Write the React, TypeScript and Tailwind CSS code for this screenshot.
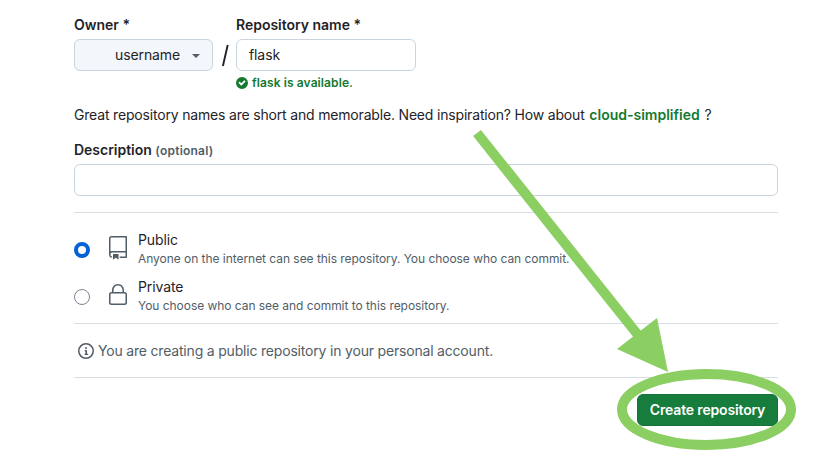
import React from "react";

function RepoIcon() {
  return (
    <svg className="h-6 w-6 shrink-0" viewBox="0 0 24 24" fill="currentColor">
      <path fillRule="evenodd" d="M3 2.75A2.75 2.75 0 015.75 0h14.5a.75.75 0 01.75.75v20.5a.75.75 0 01-.75.75h-6a.75.75 0 010-1.5h5.25v-4H6A1.5 1.5 0 004.5 18v.75c0 .716.43 1.334 1.05 1.605a.75.75 0 01-.6 1.374A3.25 3.25 0 013 18.75v-16zM19.5 1.5V15H6c-.546 0-1.059.146-1.5.401V2.75c0-.69.56-1.25 1.25-1.25H19.5z" />
      <path d="M7 18.25a.25.25 0 01.25-.25h5a.25.25 0 01.25.25v5.01a.25.25 0 01-.397.201l-2.206-1.604a.25.25 0 00-.294 0L7.397 23.46a.25.25 0 01-.397-.2v-5.01z" />
    </svg>
  );
}

function LockIcon() {
  return (
    <svg className="h-6 w-6 shrink-0" viewBox="0 0 24 24" fill="currentColor">
      <path d="M6 9V7.25C6 3.845 8.503 1 12 1s6 2.845 6 6.25V9h.5a2.5 2.5 0 0 1 2.5 2.5v8a2.5 2.5 0 0 1-2.5 2.5h-13A2.5 2.5 0 0 1 3 19.5v-8A2.5 2.5 0 0 1 5.5 9Zm-1.5 2.5v8a1 1 0 0 0 1 1h13a1 1 0 0 0 1-1v-8a1 1 0 0 0-1-1h-13a1 1 0 0 0-1 1Zm3-4.25V9h9V7.25c0-2.67-1.922-4.75-4.5-4.75-2.578 0-4.5 2.08-4.5 4.75Z" />
    </svg>
  );
}

function InfoIcon() {
  return (
    <svg className="h-4 w-4 shrink-0" viewBox="0 0 16 16" fill="currentColor">
      <path d="M0 8a8 8 0 1 1 16 0A8 8 0 0 1 0 8Zm8-6.5a6.5 6.5 0 1 0 0 13 6.5 6.5 0 0 0 0-13ZM6.5 7.75A.75.75 0 0 1 7.25 7h1a.75.75 0 0 1 .75.75v2.75h.25a.75.75 0 0 1 0 1.5h-2a.75.75 0 0 1 0-1.5h.25v-2h-.25a.75.75 0 0 1-.75-.75ZM8 6a1 1 0 1 1 0-2 1 1 0 0 1 0 2Z" />
    </svg>
  );
}

function CheckIcon() {
  return (
    <svg className="h-3 w-3 shrink-0" viewBox="0 0 12 12" fill="currentColor">
      <path d="M6 0a6 6 0 1 1 0 12A6 6 0 0 1 6 0Zm-.705 8.737L9.63 4.403 8.392 3.166 5.295 6.263l-1.7-1.702L2.356 5.8l2.938 2.938Z" />
    </svg>
  );
}

type OptionProps = {
  title: string;
  note: string;
  checked?: boolean;
  icon: React.ReactNode;
};

function VisibilityOption({ title, note, checked, icon }: OptionProps) {
  return (
    <label className="flex h-[47px] items-start">
      <span
        className={
          checked
            ? "mt-[13px] h-4 w-4 shrink-0 rounded-full border-4 border-[#0461d8] bg-white"
            : "mt-[13px] h-4 w-4 shrink-0 rounded-full border border-[#7b8594] bg-white"
        }
      />
      <span className="ml-4 mt-[7px] text-[#515d67]">{icon}</span>
      <span className="ml-2 flex flex-col whitespace-nowrap">
        <span className="h-[21px] pt-px text-sm leading-5 tracking-[-0.1px]">{title}</span>
        <span className="text-xs leading-[18px] tracking-[-0.042px] text-[#515d67]">{note}</span>
      </span>
    </label>
  );
}

export default function App() {
  return (
    <div className="relative h-[451px] w-[815px] overflow-hidden bg-white pl-[74px] pt-[15px] font-['Inter',sans-serif] text-sm text-[#1f2328]">
      <form className="w-[704px]">
        <div className="flex h-[78px]">
          <div className="w-[139px]">
            <div className="h-6 whitespace-nowrap font-semibold leading-5">Owner *</div>
            <div className="flex h-8 items-center rounded-md border border-[#c9d5de] bg-[#f3f6fa] pl-10">
              <span className="w-[66px] whitespace-nowrap tracking-[-0.1px]">username</span>
              <span className="ml-[11px] mt-[2px] border-x-4 border-t-4 border-x-transparent border-t-[#515d67]" />
            </div>
          </div>
          <div className="w-[23px] pl-[9px] pt-[25px]">
            <svg className="h-[32px] w-[7px]" viewBox="0 0 7 32">
              <path d="M0.9 26 5.7 5" stroke="#1f2328" strokeWidth="1.9" />
            </svg>
          </div>
          <div className="w-[180px]">
            <div className="h-6 whitespace-nowrap font-semibold leading-5 tracking-[-0.02px]">Repository name *</div>
            <div className="flex h-8 items-center rounded-md border border-[#c9d5de] pl-3 tracking-[-0.1px]">flask</div>
            <div className="mt-[3px] flex h-[18px] items-center gap-1 whitespace-nowrap text-xs font-semibold text-[#15792f]">
              <CheckIcon />
              <span className="tracking-[0.1px]">flask is available.</span>
            </div>
          </div>
        </div>
        <p className="mt-3 h-5 whitespace-nowrap leading-5 tracking-[-0.18px]">
          Great repository names are short and memorable. Need inspiration? How about{" "}
          <b className="ml-px font-semibold tracking-normal text-[#15792f]">cloud-simplified</b>{" "}
          <span className="ml-px">?</span>
        </p>
        <div className="mt-[15px] h-6 whitespace-nowrap font-semibold leading-5 tracking-[-0.02px]">
          Description <span className="text-xs tracking-[0.22px] text-[#515d67]">(optional)</span>
        </div>
        <div className="h-8 rounded-md border border-[#c9d5de]" />
        <div className="mt-4 border-t border-[#d8dee4] pt-4">
          <VisibilityOption title="Public" note="Anyone on the internet can see this repository. You choose who can commit." checked icon={<RepoIcon />} />
          <VisibilityOption title="Private" note="You choose who can see and commit to this repository." icon={<LockIcon />} />
        </div>
        <div className="flex h-[55px] items-center border-y border-[#d8dee4] pl-1 text-[#515d67]">
          <InfoIcon />
          <span className="ml-1 whitespace-nowrap tracking-[-0.19px]">You are creating a public repository in your personal account.</span>
        </div>
        <div className="mt-4 flex justify-end">
          <button type="button" className="h-8 w-[141px] whitespace-nowrap rounded-md border border-[#16713a] bg-[#167d3c] font-semibold tracking-[-0.16px] text-white">
            Create repository
          </button>
        </div>
      </form>
      <svg className="pointer-events-none absolute left-0 top-0" width="815" height="451" viewBox="0 0 815 451">
        <path d="M477 133 638 335" stroke="#8bce62" strokeWidth="10" />
        <path d="M617 349 657 318 668 372Z" fill="#8bce62" />
        <ellipse cx="706.5" cy="409.5" rx="84.5" ry="35.5" fill="none" stroke="#8bce62" strokeWidth="10" />
      </svg>
    </div>
  );
}
